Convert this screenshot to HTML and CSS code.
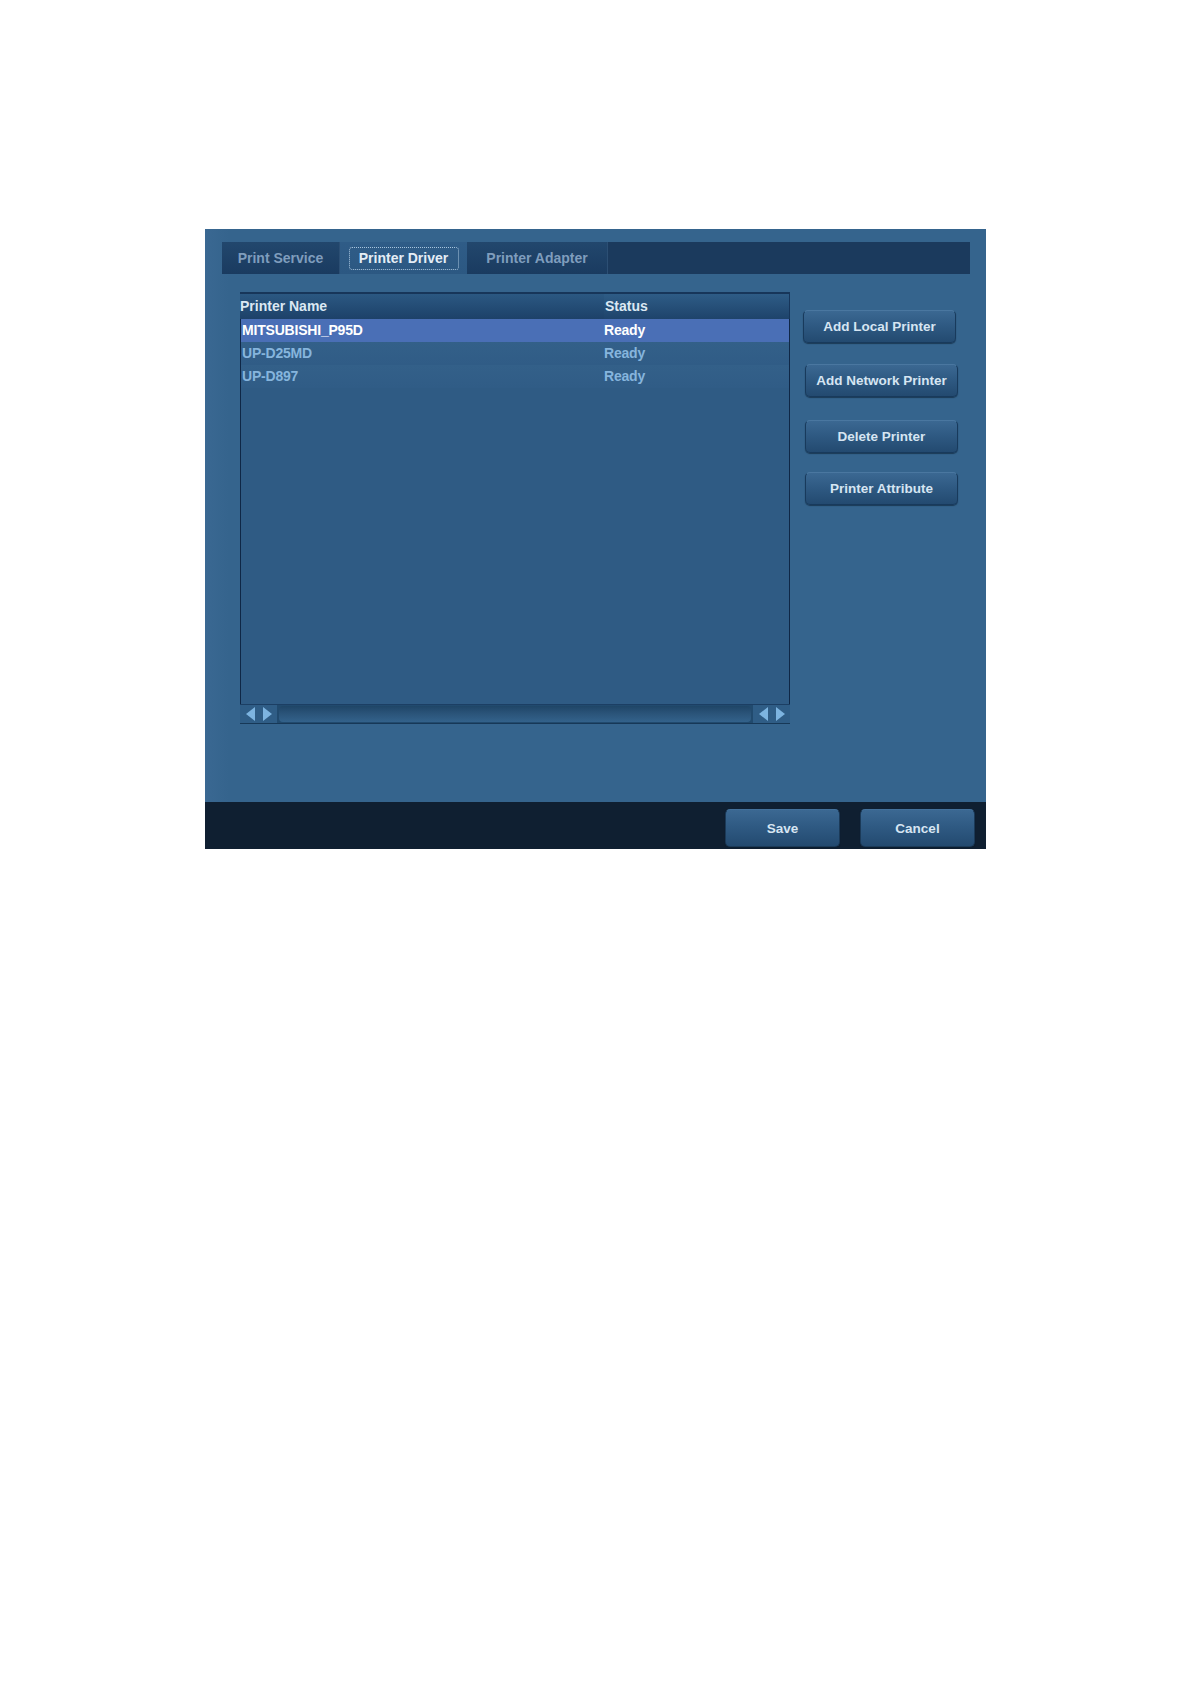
FILE: index.html
```html
<!DOCTYPE html>
<html>
<head>
<meta charset="utf-8">
<title>Printer Driver</title>
<link rel="stylesheet" href="styles.css">
</head>
<body>
<div class="dialog">
  <div class="content">
    <div class="tabbar">
      <div class="tab tab-service">Print Service</div>
      <div class="tab tab-driver active"><span class="focus">Printer Driver</span></div>
      <div class="tab tab-adapter">Printer Adapter</div>
    </div>
    <div class="main">
      <div class="table">
        <div class="thead">
          <div class="th col-name">Printer Name</div>
          <div class="th col-status">Status</div>
        </div>
        <div class="tbody">
          <div class="row selected">
            <div class="td col-name">MITSUBISHI_P95D</div>
            <div class="td col-status">Ready</div>
          </div>
          <div class="row">
            <div class="td col-name">UP-D25MD</div>
            <div class="td col-status">Ready</div>
          </div>
          <div class="row">
            <div class="td col-name">UP-D897</div>
            <div class="td col-status">Ready</div>
          </div>
        </div>
        <div class="hscroll">
          <div class="arrows">
            <svg width="32" height="14" viewBox="0 0 32 14"><polygon points="12,0 12,14 3,7" fill="#7db4e0"/><polygon points="20,0 20,14 29,7" fill="#7db4e0"/></svg>
          </div>
          <div class="track"><div class="track-inner"></div></div>
          <div class="arrows">
            <svg width="32" height="14" viewBox="0 0 32 14"><polygon points="12,0 12,14 3,7" fill="#7db4e0"/><polygon points="20,0 20,14 29,7" fill="#7db4e0"/></svg>
          </div>
        </div>
      </div>
      <div class="actions">
        <button class="btn side">Add Local Printer</button>
        <button class="btn side shifted">Add Network Printer</button>
        <button class="btn side shifted lowered">Delete Printer</button>
        <button class="btn side shifted">Printer Attribute</button>
      </div>
    </div>
  </div>
  <div class="footer">
    <button class="btn foot">Save</button>
    <button class="btn foot">Cancel</button>
  </div>
</div>
</body>
</html>
```
FILE: styles.css
```css
html, body {
  margin: 0;
  padding: 0;
  background: #ffffff;
}
body {
  font-family: "Liberation Sans", Arial, sans-serif;
  font-weight: bold;
  font-size: 14px;
}
.dialog {
  margin: 229px 0 0 205px;
  width: 781px;
  height: 620px;
  display: flex;
  flex-direction: column;
  background: linear-gradient(90deg, #3a6892 0px, #35648d 24px, #35648d 100%);
}
.content {
  flex: 1;
  padding: 13px 16px 0 17px;
}
.tabbar {
  height: 32px;
  display: flex;
  background: #1b3a5d;
}
.tab {
  height: 32px;
  line-height: 32px;
  text-align: center;
  color: #7f9dbd;
  background: linear-gradient(#22476d, #1a3b60);
  box-sizing: border-box;
  border-right: 1px solid #2c4f74;
}
.tab-service { width: 118px; }
.tab-driver { width: 127px; }
.tab-adapter { width: 141px; }
.tab.active {
  background: linear-gradient(#2f5c87, #2c5882);
  color: #e4edf6;
  border-right: none;
  display: flex;
  align-items: center;
  justify-content: center;
}
.focus {
  display: block;
  width: 108px;
  height: 21px;
  line-height: 21px;
  border: 1px dotted #a9c5de;
  border-radius: 3px;
}
.main {
  display: flex;
  align-items: flex-start;
  margin-top: 18px;
  padding-left: 18px;
}
.table {
  width: 550px;
  height: 432px;
  display: flex;
  flex-direction: column;
  box-sizing: border-box;
}
.thead {
  height: 27px;
  display: flex;
  border-top: 2px solid #17365a;
  box-sizing: border-box;
}
.th {
  height: 25px;
  line-height: 24px;
  color: #dbe8f3;
  background: linear-gradient(#2e5c86, #1e436b);
}
.thead .col-name {
  width: 364px;
  box-sizing: border-box;
  background: linear-gradient(#2b5882, #1d4169);
}
.thead .col-status {
  flex: 1;
  padding-left: 1px;
  border-right: 1px solid #16355a;
}
.tbody {
  flex: 1;
  background: #2f5b84;
  border-left: 1px solid #0f2746;
  border-right: 1px solid #0f2746;
}
.row {
  height: 23px;
  display: flex;
  line-height: 23px;
  color: #86b5dd;
  background: linear-gradient(#336089, #305c86);
}
.row.selected {
  background: #4a6fb6;
  color: #ffffff;
}
.td {
  letter-spacing: -0.2px;
}
.td.col-name {
  width: 363px;
  padding-left: 1px;
  box-sizing: border-box;
}
.td.col-status {
  flex: 1;
}
.hscroll {
  height: 20px;
  display: flex;
  background: #2f5b83;
  border-top: 1px solid #1c3f64;
  border-bottom: 1px solid #173857;
  box-sizing: border-box;
}
.arrows {
  width: 37px;
  display: flex;
  align-items: center;
  justify-content: center;
  background: #2f5d86;
}
.arrows svg { display: block; }
.track {
  flex: 1;
  padding: 1px 2px;
  background: #214a6e;
}
.track-inner {
  height: 16px;
  border-radius: 4px;
  background: linear-gradient(#1f4566 0%, #2a5378 45%, #33628b 100%);
}
.actions {
  margin-left: 13px;
  margin-top: 18px;
  display: flex;
  flex-direction: column;
  gap: 21px;
}
.btn {
  font-family: "Liberation Sans", Arial, sans-serif;
  font-weight: bold;
  font-size: 13.5px;
  color: #d6e5f2;
  border: 1px solid #183a5c;
  border-top-color: #4a77a0;
  border-radius: 5px;
  background: linear-gradient(#3b6892 0%, #2f5a83 45%, #234a70 100%);
  box-shadow: 0 1px 1px rgba(10, 30, 50, 0.6);
  padding: 0;
  cursor: default;
}
.btn.side {
  width: 153px;
  height: 33px;
}
.btn.side.shifted {
  margin-left: 2px;
}
.btn.side.lowered {
  margin-top: 2px;
  margin-bottom: -2px;
}
.footer {
  height: 47px;
  background: #0f1f31;
  display: flex;
  justify-content: flex-end;
  align-items: flex-start;
  gap: 20px;
  padding: 7px 11px 0 0;
  box-sizing: border-box;
}
.btn.foot {
  width: 115px;
  height: 38px;
  border-color: #1b3a58;
  border-top-color: #43709a;
}
```
